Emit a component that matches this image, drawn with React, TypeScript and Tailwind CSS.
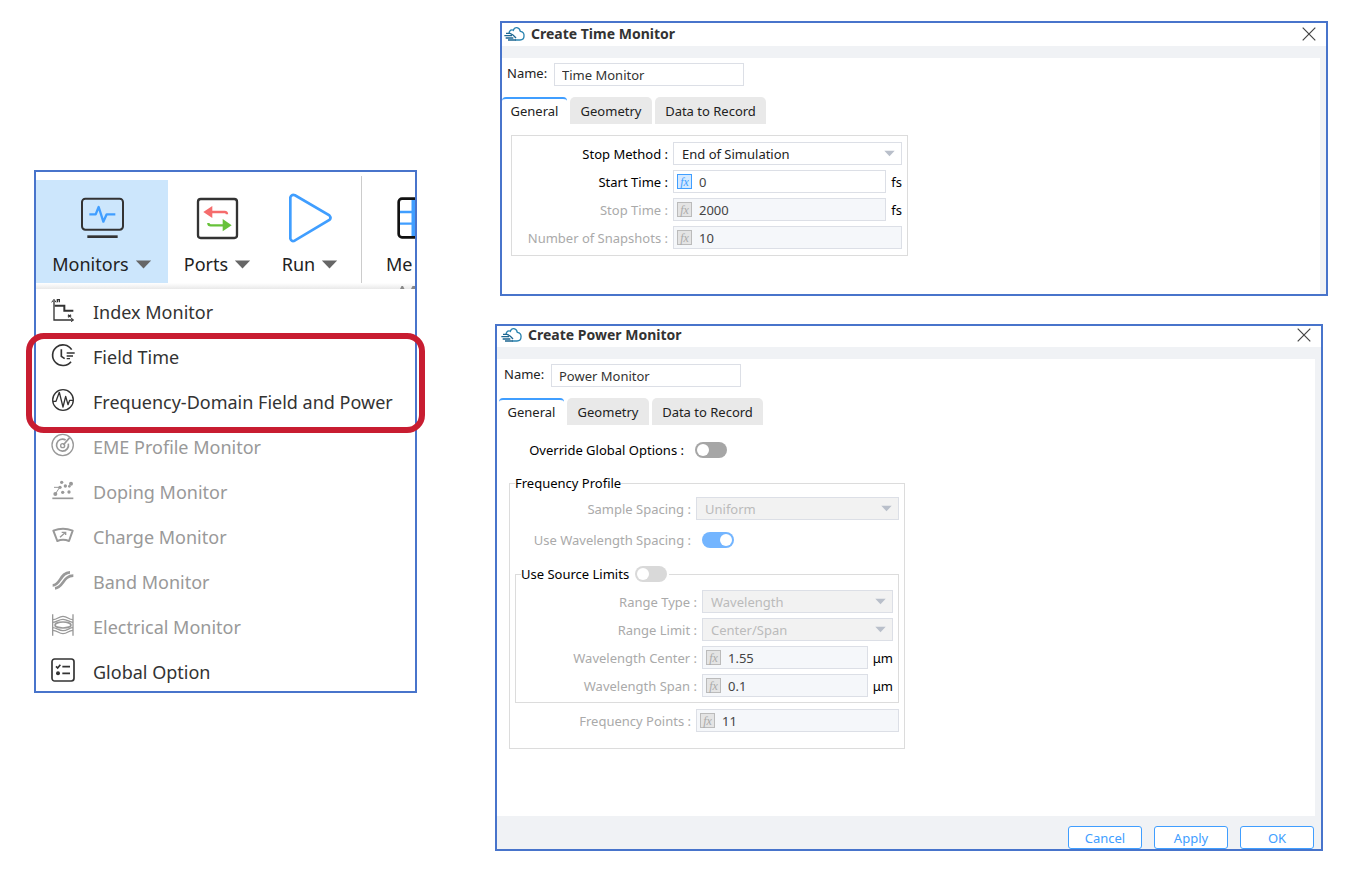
import React from "react";

const toolbarLabel = "mt-[7px] flex h-7 items-center justify-center gap-[6px] text-[18px] text-[#222]";

function Caret({ className }: { className: string }) {
  return (
    <svg viewBox="0 0 18 10" className={className} aria-hidden="true">
      <path d="M0.5 0.5H17.5L9 9.5Z" fill="currentColor" />
    </svg>
  );
}

function ToolButton({
  label,
  className,
  children,
}: {
  label: string;
  className: string;
  children: React.ReactNode;
}) {
  return (
    <button type="button" className={`flex h-[103px] shrink-0 flex-col items-center pt-[13px] ${className}`}>
      <span className="flex h-[50px] items-center justify-center">{children}</span>
      <span className={toolbarLabel}>
        {label}
        <Caret className="h-[9px] w-[17px] text-[#666]" />
      </span>
    </button>
  );
}

function MenuIcon({ children }: { children: React.ReactNode }) {
  return (
    <svg
      viewBox="0 0 72 72"
      className="mb-1 h-6 w-6 shrink-0"
      fill="none"
      stroke="currentColor"
      strokeWidth="5"
      aria-hidden="true"
    >
      {children}
    </svg>
  );
}

const menu: { label: string; off?: boolean; icon: React.ReactNode }[] = [
  {
    label: "Index Monitor",
    icon: (
      <>
        <path d="M9 8V66H66" strokeWidth="4" />
        <path d="M2 13L9 4L15 13M60 60L68 66L60 71" strokeWidth="3" />
        <path d="M11 23H40V38H67" strokeWidth="6" />
        <path d="M19 13V5H25V13M51 50L60 58M60 50L51 58" strokeWidth="4" />
      </>
    ),
  },
  {
    label: "Field Time",
    icon: (
      <>
        <path d="M62 20A31 31 0 1 0 60 56" />
        <path d="M31 19V40L41 47" />
        <path d="M47 30H71M47 39H66M47 47H57" strokeWidth="4" />
      </>
    ),
  },
  {
    label: "Frequency-Domain Field and Power",
    icon: (
      <>
        <circle cx="36" cy="36" r="31" strokeWidth="4" />
        <path d="M6 40H15L25 13L36 57L44 25L51 50L56 37H66" strokeWidth="4" strokeLinejoin="round" />
      </>
    ),
  },
  {
    label: "EME Profile Monitor",
    off: true,
    icon: (
      <>
        <circle cx="35" cy="36" r="32" strokeWidth="4" />
        <path d="M44 21A18 18 0 1 0 52 32" />
        <path d="M56 14L37 36" />
        <circle cx="35" cy="38" r="6" strokeWidth="4" />
      </>
    ),
  },
  {
    label: "Doping Monitor",
    off: true,
    icon: (
      <>
        <path d="M4 61H67" strokeWidth="5" />
        <path d="M9 28H26L13 48" strokeWidth="3" />
        <g fill="currentColor" stroke="none">
          <circle cx="32" cy="13" r="5" />
          <circle cx="60" cy="17" r="6" />
          <circle cx="27" cy="28" r="5" />
          <circle cx="43" cy="24" r="5" />
          <circle cx="55" cy="25" r="4" />
          <circle cx="13" cy="48" r="6" />
          <circle cx="35" cy="43" r="5" />
          <circle cx="54" cy="42" r="5" />
        </g>
      </>
    ),
  },
  {
    label: "Charge Monitor",
    off: true,
    icon: (
      <>
        <path d="M7 23Q36 12 65 23L54 54Q36 47 19 54Z" strokeWidth="6" strokeLinejoin="round" />
        <path d="M27 43L44 28M32 28H44V36" strokeWidth="4" />
      </>
    ),
  },
  {
    label: "Band Monitor",
    off: true,
    icon: (
      <>
        <path d="M5 52C28 52 28 13 57 13" strokeWidth="8" />
        <path d="M12 61C38 58 36 23 67 23" strokeWidth="8" />
      </>
    ),
  },
  {
    label: "Electrical Monitor",
    off: true,
    icon: (
      <>
        <path d="M5 4V68M66 4V68" strokeWidth="4" />
        <path
          d="M5 20C20 20 22 10 36 10S52 20 66 20M5 52C20 52 22 62 36 62S52 52 66 52M5 28C18 28 22 19 36 19S54 28 66 28M5 44C18 44 22 53 36 53S54 44 66 44"
          strokeWidth="4"
        />
        <ellipse cx="36" cy="36" rx="24" ry="9" strokeWidth="5" />
      </>
    ),
  },
  {
    label: "Global Option",
    icon: (
      <>
        <rect x="3" y="3" width="66" height="66" rx="8" />
        <path d="M15 25L20 30L28 20M34 26H57M34 46H57" strokeWidth="5" />
        <circle cx="21" cy="46" r="6" fill="currentColor" stroke="none" />
      </>
    ),
  },
];

function MonitorsMenu() {
  return (
    <section className="mt-[149px] w-[383px] shrink-0 border-2 border-[#4874cb] bg-white">
      <div className="flex h-[111px] overflow-hidden pt-2">
        <ToolButton label="Monitors" className="w-[132px] bg-[#cce6fc]">
          <svg viewBox="165 95 135 129" className="h-[43px] w-[45px]" fill="none" aria-hidden="true">
            <rect x="171" y="100" width="123" height="93" rx="10" stroke="#333" strokeWidth="6" />
            <path d="M187 214H278" stroke="#333" strokeWidth="8" />
            <path
              d="M193 147H212L221 125L235 169L245 147H271"
              stroke="#409eff"
              strokeWidth="7"
              strokeLinejoin="round"
            />
          </svg>
        </ToolButton>
        <ToolButton label="Ports" className="w-[99px]">
          <svg viewBox="514 94 129 129" className="h-[43px] w-[43px]" fill="none" aria-hidden="true">
            <rect x="520" y="100" width="117" height="117" rx="8" stroke="#333" strokeWidth="7" />
            <path d="M555 139H600Q607 139 607 146" stroke="#f56c6c" strokeWidth="7" />
            <path d="M536 139L563 121V157Z" fill="#f56c6c" />
            <path d="M551 172Q551 179 558 179H600" stroke="#67c23a" strokeWidth="7" />
            <path d="M621 179L594 160V197Z" fill="#67c23a" />
          </svg>
        </ToolButton>
        <ToolButton label="Run" className="w-[86px]">
          <svg viewBox="789 86 132 150" className="h-[50px] w-[44px]" fill="none" aria-hidden="true">
            <path
              d="M796 99V223Q799 233 809 229L913 167Q920 160 913 153L810 93Q799 89 796 99Z"
              stroke="#409eff"
              strokeWidth="8"
            />
          </svg>
        </ToolButton>
        <div className="-mt-1 ml-2 w-px shrink-0 bg-[#ccc]" />
        <button type="button" className="flex h-[103px] flex-1 flex-col overflow-hidden pt-[13px] pl-6 text-left">
          <span className="flex h-[50px] items-center pl-[11px]">
            <svg viewBox="1116 97 126 126" className="h-[42px] w-[42px] shrink-0" fill="none" aria-hidden="true">
              <path d="M1122 142H1236M1122 177H1236M1163 103V217" stroke="#409eff" strokeWidth="7" />
              <rect x="1164" y="104" width="36" height="112" fill="#409eff" />
              <rect x="1121" y="102" width="116" height="116" rx="10" stroke="#111" strokeWidth="8" />
            </svg>
          </span>
          <span className="mt-[7px] h-7 text-[18px] leading-7 text-[#222]">Me</span>
        </button>
      </div>
      <div className="flex h-[6px] items-end justify-end bg-linear-to-b from-white to-[#e9e9e9]">
        <svg viewBox="0 0 15 3" className="h-[3px] w-[15px]" aria-hidden="true">
          <path d="M0 3L1.5 0H3L4.5 3ZM11 3L12.5 0H15V3Z" fill="#888" />
        </svg>
      </div>
      <div className="relative">
        <ul className="h-[402px]">
          {menu.map((m) => (
            <li key={m.label}>
              <button
                type="button"
                disabled={m.off}
                className={`flex h-[45px] w-full items-center gap-[18px] pl-[15px] text-left text-[18px] whitespace-nowrap ${
                  m.off ? "text-[#999]" : "text-[#333]"
                }`}
              >
                <MenuIcon>{m.icon}</MenuIcon>
                {m.label}
              </button>
            </li>
          ))}
        </ul>
        <div className="pointer-events-none absolute -inset-x-[10px] top-11 h-[100px] rounded-[18px] border-6 border-[#c81d31]" />
      </div>
    </section>
  );
}

function CloudLogo() {
  return (
    <svg viewBox="0 0 63 48" className="h-4 w-[21px]" fill="none" aria-hidden="true">
      <path
        d="M15 22C16 12 24 10 28 13C32 1 46 2 49 16C57 17 61 22 60 30C60 38 55 42 48 42H34"
        stroke="#2a84b0"
        strokeWidth="4"
      />
      <path d="M6 22H18Q27 25 36 36M1 29H24M5 36H28M12 42H36" stroke="#1d6690" strokeWidth="4" />
    </svg>
  );
}

function Dialog({
  title,
  className,
  headerClass,
  bodyClass,
  children,
  footer,
}: {
  title: string;
  className: string;
  headerClass: string;
  bodyClass: string;
  children: React.ReactNode;
  footer?: React.ReactNode;
}) {
  return (
    <section className={`border-2 border-[#4874cb] bg-[#f0f2f5] ${className}`}>
      <header className={`flex items-center bg-white pr-[10px] ${headerClass}`}>
        <CloudLogo />
        <h2 className="ml-[6px] flex-1 text-[14px] leading-[18px] font-bold text-[#333]">{title}</h2>
        <button type="button" aria-label="Close">
          <svg viewBox="0 0 14 14" className="h-[14px] w-[14px]" aria-hidden="true">
            <path d="M0.7 0.7L13.3 13.3M13.3 0.7L0.7 13.3" stroke="#444" strokeWidth="1.2" />
          </svg>
        </button>
      </header>
      <div className={`mt-3 mr-[6px] bg-white pt-[5px] ${bodyClass}`}>{children}</div>
      {footer}
    </section>
  );
}

function NameAndTabs({ id, value }: { id: string; value: string }) {
  return (
    <>
      <div className="flex items-center gap-[6px] pl-[5px]">
        <label htmlFor={id} className="w-[41px] pb-[3px] whitespace-nowrap">
          Name:
        </label>
        <input
          id={id}
          defaultValue={value}
          className="h-[23px] w-[190px] border border-[#dcdfe6] bg-white px-[7px] text-[#333]"
        />
      </div>
      <div role="tablist" className="mt-[11px] flex gap-[3px]">
        <button
          type="button"
          role="tab"
          aria-selected="true"
          className="h-[27px] w-[65px] rounded-t-[4px] border-t-2 border-[#409eff] pb-0.5"
        >
          General
        </button>
        <button type="button" role="tab" aria-selected="false" className="h-[27px] w-[82px] rounded-t-[5px] bg-[#e9e9e9]">
          Geometry
        </button>
        <button type="button" role="tab" aria-selected="false" className="h-[27px] w-[111px] rounded-t-[5px] bg-[#e9e9e9]">
          Data to Record
        </button>
      </div>
    </>
  );
}

function Row({
  id,
  label,
  off,
  labelClass,
  unit,
  children,
}: {
  id: string;
  label: string;
  off?: boolean;
  labelClass: string;
  unit?: string;
  children: React.ReactNode;
}) {
  return (
    <div className="flex h-[23px] items-center gap-[5px]">
      <label htmlFor={id} className={`text-right whitespace-nowrap ${labelClass} ${off ? "text-[#aaa]" : "text-black"}`}>
        {label} :
      </label>
      {children}
      {unit && <span className="text-black">{unit}</span>}
    </div>
  );
}

function Select({ id, value, off }: { id: string; value: string; off?: boolean }) {
  return (
    <div className="relative flex-1">
      <select
        id={id}
        disabled={off}
        defaultValue={value}
        className={`block h-[23px] w-full appearance-none border border-[#dcdfe6] pl-[8px] opacity-100 ${
          off ? "bg-[#f2f2f2] text-[#bbb]" : "bg-white text-[#222]"
        }`}
      >
        <option>{value}</option>
      </select>
      <Caret className="pointer-events-none absolute top-[8px] right-[7px] h-[7px] w-[11px] text-[#b9bfca]" />
    </div>
  );
}

function FxInput({ id, value, off }: { id: string; value: string; off?: boolean }) {
  return (
    <div
      className={`flex h-[23px] min-w-0 flex-1 items-center gap-[7px] border border-[#dcdfe6] pl-[3px] ${
        off ? "bg-[#f5f7fa]" : "bg-white"
      }`}
    >
      <span
        className={`flex h-[15px] w-[15px] shrink-0 items-center justify-center border font-['Liberation_Serif',serif] text-[12px] leading-none italic ${
          off ? "border-[#bbb] bg-[#e4e4e4] text-[#aaa]" : "border-[#409eff] bg-[#d4e9ff] text-[#409eff]"
        }`}
      >
        fx
      </span>
      <input id={id} defaultValue={value} disabled={off} className="w-full min-w-0 bg-transparent text-[#444]" />
    </div>
  );
}

function Toggle({ id, on, off, track }: { id: string; on?: boolean; off?: boolean; track: string }) {
  return (
    <span className={`relative inline-flex h-4 w-8 items-center rounded-full px-0.5 ${track} ${on ? "justify-end" : ""}`}>
      <input
        id={id}
        type="checkbox"
        role="switch"
        defaultChecked={on}
        disabled={off}
        className="absolute inset-0 m-0 h-full w-full appearance-none"
      />
      <span className="h-3 w-3 rounded-full bg-white" />
    </span>
  );
}

const footerButton = "h-[23px] w-[74px] rounded-[3px] border border-[#409eff] bg-white text-[#409eff]";

export default function App() {
  return (
    <main className="flex min-h-screen items-start gap-[78px] bg-white py-[21px] pr-[21px] pl-[34px] font-['Noto_Sans',sans-serif] text-[13px] leading-5 text-[#222]">
      <MonitorsMenu />
      <div className="flex min-w-0 flex-1 flex-col gap-7">
        <Dialog title="Create Time Monitor" className="ml-[5px]" headerClass="h-[23px] pb-0.5 pl-0.5" bodyClass="pb-[38px]">
          <NameAndTabs id="time-name" value="Time Monitor" />
          <div className="mt-[11px] ml-[9px] flex w-[397px] flex-col gap-[5px] border border-[#dcdcdc] px-[5px] py-[6px]">
            <Row id="stop-method" label="Stop Method" labelClass="w-[151px]">
              <Select id="stop-method" value="End of Simulation" />
            </Row>
            <Row id="start-time" label="Start Time" labelClass="w-[151px]" unit="fs">
              <FxInput id="start-time" value="0" />
            </Row>
            <Row id="stop-time" label="Stop Time" off labelClass="w-[151px]" unit="fs">
              <FxInput id="stop-time" value="2000" off />
            </Row>
            <Row id="snapshots" label="Number of Snapshots" off labelClass="w-[151px]">
              <FxInput id="snapshots" value="10" off />
            </Row>
          </div>
        </Dialog>

        <Dialog
          title="Create Power Monitor"
          className="mr-[5px]"
          headerClass="h-[21px] pb-1 pl-1"
          bodyClass="pb-[67px] pl-0.5"
          footer={
            <footer className="flex justify-end gap-3 pt-[10px] pr-[7px]">
              <button type="button" className={footerButton}>
                Cancel
              </button>
              <button type="button" className={footerButton}>
                Apply
              </button>
              <button type="button" className={footerButton}>
                OK
              </button>
            </footer>
          }
        >
          <NameAndTabs id="power-name" value="Power Monitor" />
          <div className="mt-[15px] flex h-5 items-center gap-[11px]">
            <label htmlFor="override" className="w-[185px] text-right whitespace-nowrap text-black">
              Override Global Options :
            </label>
            <Toggle id="override" track="bg-[#a6a6a6]" />
          </div>
          <fieldset className="mt-[13px] ml-[10px] w-[396px] border border-[#dcdcdc] px-[5px] pb-4">
            <legend className="h-5 text-black">Frequency Profile</legend>
            <div className="flex flex-col pt-1">
              <Row id="sample-spacing" label="Sample Spacing" off labelClass="w-[176px]">
                <Select id="sample-spacing" value="Uniform" off />
              </Row>
              <div className="mt-2 flex h-[23px] items-center gap-[11px]">
                <label htmlFor="wl-spacing" className="w-[176px] text-right whitespace-nowrap text-[#aaa]">
                  Use Wavelength Spacing :
                </label>
                <Toggle id="wl-spacing" on off track="bg-[#73b5ff]" />
              </div>
              <fieldset className="mt-[13px] border border-[#dcdcdc] px-[5px] pb-[5px]">
                <legend className="flex h-5 items-center gap-[6px] pr-0.5 text-black">
                  <label htmlFor="source-limits">Use Source Limits</label>
                  <Toggle id="source-limits" off track="bg-[#d9d9d9]" />
                </legend>
                <div className="mt-[6px] flex flex-col gap-[5px]">
                  <Row id="range-type" label="Range Type" off labelClass="w-[176px]">
                    <Select id="range-type" value="Wavelength" off />
                  </Row>
                  <Row id="range-limit" label="Range Limit" off labelClass="w-[176px]">
                    <Select id="range-limit" value="Center/Span" off />
                  </Row>
                  <Row id="wl-center" label="Wavelength Center" off labelClass="w-[176px]" unit="μm">
                    <FxInput id="wl-center" value="1.55" off />
                  </Row>
                  <Row id="wl-span" label="Wavelength Span" off labelClass="w-[176px]" unit="μm">
                    <FxInput id="wl-span" value="0.1" off />
                  </Row>
                </div>
              </fieldset>
              <div className="mt-[6px]">
                <Row id="points" label="Frequency Points" off labelClass="w-[176px]">
                  <FxInput id="points" value="11" off />
                </Row>
              </div>
            </div>
          </fieldset>
        </Dialog>
      </div>
    </main>
  );
}
